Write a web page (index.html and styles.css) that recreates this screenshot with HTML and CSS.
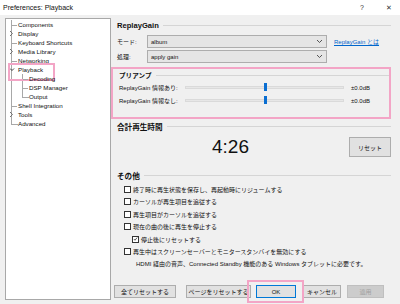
FILE: index.html
```html
<!DOCTYPE html>
<html lang="ja">
<head>
    <meta charset="UTF-8">
    <title>Preferences: Playback</title>
    <link rel="stylesheet" href="styles.css">
</head>
<body>
    <div class="titlebar">
        <span class="title">Preferences: Playback</span>
        <span class="help">?</span>
        <span class="close">✕</span>
    </div>

    <div class="main">
        <div class="tree">
            <ul class="nodes">
                <li><div class="row"><span class="twig"></span>Components</div></li>
                <li><div class="row"><span class="twig exp"><svg width="5" height="7" viewBox="0 0 5 7"><path d="M1 1l2.5 2.5L1 6" fill="none" stroke="#666" stroke-width="0.9"/></svg></span>Display</div></li>
                <li><div class="row"><span class="twig"></span>Keyboard Shortcuts</div></li>
                <li><div class="row"><span class="twig exp"><svg width="5" height="7" viewBox="0 0 5 7"><path d="M1 1l2.5 2.5L1 6" fill="none" stroke="#666" stroke-width="0.9"/></svg></span>Media Library</div></li>
                <li><div class="row"><span class="twig"></span>Networking</div></li>
                <li>
                    <div class="row selected"><span class="twig exp"><svg width="6" height="7" viewBox="0 0 6 7"><path d="M1 2.5l2 2 2-2" fill="none" stroke="#333" stroke-width="0.9"/></svg></span>Playback</div>
                    <ul class="nodes sub">
                        <li><div class="row"><span class="twig"></span>Decoding</div></li>
                        <li><div class="row"><span class="twig"></span>DSP Manager</div></li>
                        <li class="last"><div class="row"><span class="twig"></span>Output</div></li>
                    </ul>
                </li>
                <li><div class="row"><span class="twig"></span>Shell Integration</div></li>
                <li><div class="row"><span class="twig exp"><svg width="5" height="7" viewBox="0 0 5 7"><path d="M1 1l2.5 2.5L1 6" fill="none" stroke="#666" stroke-width="0.9"/></svg></span>Tools</div></li>
                <li class="last"><div class="row"><span class="twig"></span>Advanced</div></li>
            </ul>
        </div>

        <div class="page">
            <div class="group-head"><span>ReplayGain</span><i></i></div>
            <div class="field first">
                <span class="field-label">モード:</span>
                <div class="select">album<svg width="7" height="5" viewBox="0 0 7 5"><path d="M1 1l2.5 2.5L6 1" fill="none" stroke="#444" stroke-width="0.9"/></svg></div>
                <a class="link" href="#">ReplayGain とは</a>
            </div>
            <div class="field">
                <span class="field-label">処理:</span>
                <div class="select">apply gain<svg width="7" height="5" viewBox="0 0 7 5"><path d="M1 1l2.5 2.5L6 1" fill="none" stroke="#444" stroke-width="0.9"/></svg></div>
            </div>

            <div class="preamp">
                <div class="group-head small"><span>プリアンプ</span><i></i></div>
                <div class="slider-row">
                    <span class="slider-label">ReplayGain 情報あり:</span>
                    <div class="track"><span class="thumb" style="left: 78px"></span></div>
                    <span class="value">±0.0dB</span>
                </div>
                <div class="slider-row">
                    <span class="slider-label">ReplayGain 情報なし:</span>
                    <div class="track"><span class="thumb" style="left: 78px"></span></div>
                    <span class="value">±0.0dB</span>
                </div>
            </div>

            <div class="group-head"><span>合計再生時間</span><i></i></div>
            <div class="time-row">
                <span class="time">4:26</span>
                <button class="btn reset">リセット</button>
            </div>

            <div class="group-head other"><span>その他</span><i></i></div>
            <div class="checks">
                <div class="check"><span class="box"></span>終了時に再生状態を保存し、再起動時にリジュームする</div>
                <div class="check"><span class="box"></span>カーソルが再生項目を追従する</div>
                <div class="check"><span class="box"></span>再生項目がカーソルを追従する</div>
                <div class="check"><span class="box"></span>現在の曲の後に再生を停止する</div>
                <div class="check indent"><span class="box checked"><svg width="6" height="6" viewBox="0 0 6 6"><path d="M1 3l1.4 1.5L5 1.2" fill="none" stroke="#222" stroke-width="0.9"/></svg></span>停止後にリセットする</div>
                <div class="check"><span class="box"></span>再生中はスクリーンセーバーとモニタースタンバイを無効にする</div>
                <div class="note">HDMI 経由の音声、Connected Standby 機能のある Windows タブレットに必要です。</div>
            </div>

            <div class="buttons">
                <button class="btn w-all">全てリセットする</button>
                <button class="btn w-page">ページをリセットする</button>
                <button class="btn ok">OK</button>
                <button class="btn w-cancel">キャンセル</button>
                <button class="btn w-apply" disabled>適用</button>
            </div>
        </div>
    </div>
</body>
</html>
```

FILE: styles.css
```css
* { margin: 0; padding: 0; box-sizing: border-box; }
body {
    font-family: 'Liberation Sans', 'Noto Sans CJK JP', sans-serif;
    font-size: 6px;
    color: #111;
    background: #f0f0f0;
    width: 400px;
    height: 304px;
    overflow: hidden;
}

/* title bar */
.titlebar {
    height: 15px;
    background: #fff;
    display: flex;
    align-items: center;
    padding-left: 3px;
    font-size: 7px;
}
.title { flex: 1; }
.help { width: 26px; font-size: 7px; color: #333; }
.close { width: 14px; font-size: 7px; color: #333; }

.main {
    display: flex;
    height: 289px;
    padding: 3px 9px 4px 5px;
}

/* tree */
.tree {
    width: 106px;
    background: #fff;
    border: 1px solid #a8a8a8;
    padding: 1px 0 0 5px;
    font-size: 6.2px;
}
.nodes { list-style: none; }
.nodes li { border-left: 1px solid #a8a8a8; }
.nodes li.last { border-left-color: transparent; }
.sub { margin-left: 10px; }
.row {
    height: 9px;
    display: flex;
    align-items: center;
    position: relative;
}
.twig {
    width: 6px;
    height: 9px;
    flex-shrink: 0;
}
.twig::before {
    content: '';
    display: block;
    height: 4.5px;
    width: 5px;
    border-bottom: 1px solid #a8a8a8;
}
.last > .row .twig::before {
    border-left: 1px solid #a8a8a8;
    margin-left: -1px;
    width: 6px;
}
.twig.exp {
    display: flex;
    align-items: center;
    margin-left: -3px;
    width: 9px;
}
.twig.exp::before { display: none; }
.selected::after {
    content: '';
    position: absolute;
    left: -4px;
    top: -2px;
    width: 43px;
    height: 14px;
    border: 2px solid #f3a5c6;
}

/* right page */
.page {
    flex: 1;
    display: flex;
    flex-direction: column;
    padding-left: 0;
}
.group-head {
    display: flex;
    align-items: center;
    height: 14px;
    padding-left: 6px;
    font-size: 7.6px;
    font-weight: bold;
}
.group-head i {
    flex: 1;
    height: 1px;
    background: #d5d5d5;
    margin-left: 4px;
}
.group-head.small {
    height: 12px;
    padding-left: 6px;
    font-size: 6.6px;
}

.field {
    display: flex;
    align-items: center;
    height: 13px;
    margin-top: 2px;
    padding-left: 6px;
}
.field.first { margin-top: 3px; }
.field-label { width: 30px; }
.select {
    width: 180px;
    height: 13px;
    background: #e5e5e5;
    border: 1px solid #adadad;
    display: flex;
    align-items: center;
    justify-content: space-between;
    padding: 0 3px;
}
.link {
    margin-left: 7px;
    color: #0066cc;
    text-decoration: underline;
}

.preamp {
    margin-top: 4px;
    height: 52px;
    border: 2px solid #f3a5c6;
    padding: 0 0 0 0;
}
.preamp .group-head { padding-left: 6px; }
.slider-row {
    display: flex;
    align-items: center;
    height: 13px;
    padding-left: 6px;
}
.slider-label { width: 66px; }
.track {
    position: relative;
    width: 159px;
    height: 3px;
    background: #e7e7e7;
    border: 1px solid #dadada;
}
.thumb {
    position: absolute;
    top: -4px;
    width: 3px;
    height: 8px;
    background: #0a6ed1;
}
.value { margin-left: 7px; }

.time-row {
    display: flex;
    align-items: center;
    height: 20px;
    margin-top: 4px;
    margin-bottom: 12px;
}
.time {
    flex: 1;
    padding-left: 101px;
    font-size: 19px;
}
.btn {
    font-family: inherit;
    font-size: 6px;
    color: #111;
    background: #e1e1e1;
    border: 1px solid #adadad;
    height: 13px;
}
.btn.reset { width: 42px; height: 20px; }

.other { height: 12px; }
.checks { margin-top: 2px; padding-left: 13px; }
.check {
    display: flex;
    align-items: center;
    height: 12.5px;
}
.check.indent { padding-left: 8px; }
.box {
    width: 7px;
    height: 7px;
    border: 1px solid #333;
    background: #fff;
    margin-right: 2px;
    display: flex;
    align-items: center;
    justify-content: center;
}
.box.checked { margin-right: 2px; }
.note {
    height: 12.5px;
    line-height: 12.5px;
    padding-left: 12px;
}

.buttons {
    margin-top: auto;
    margin-bottom: 2px;
    display: flex;
    padding-left: 3px;
}
.w-all { width: 62px; margin-right: 10px; }
.w-page { width: 65px; margin-right: 5px; }
.ok {
    width: 40px;
    margin-right: 7px;
    border-color: #0078d7;
    position: relative;
}
.ok::after {
    content: '';
    position: absolute;
    left: -10px;
    right: -9px;
    top: -6px;
    bottom: -6px;
    border: 2.5px solid #f3a5c6;
}
.w-cancel { width: 38px; margin-right: 6px; }
.w-apply {
    width: 37px;
    color: #a0a0a0;
    background: #cccccc;
    border-color: #bfbfbf;
}
```
